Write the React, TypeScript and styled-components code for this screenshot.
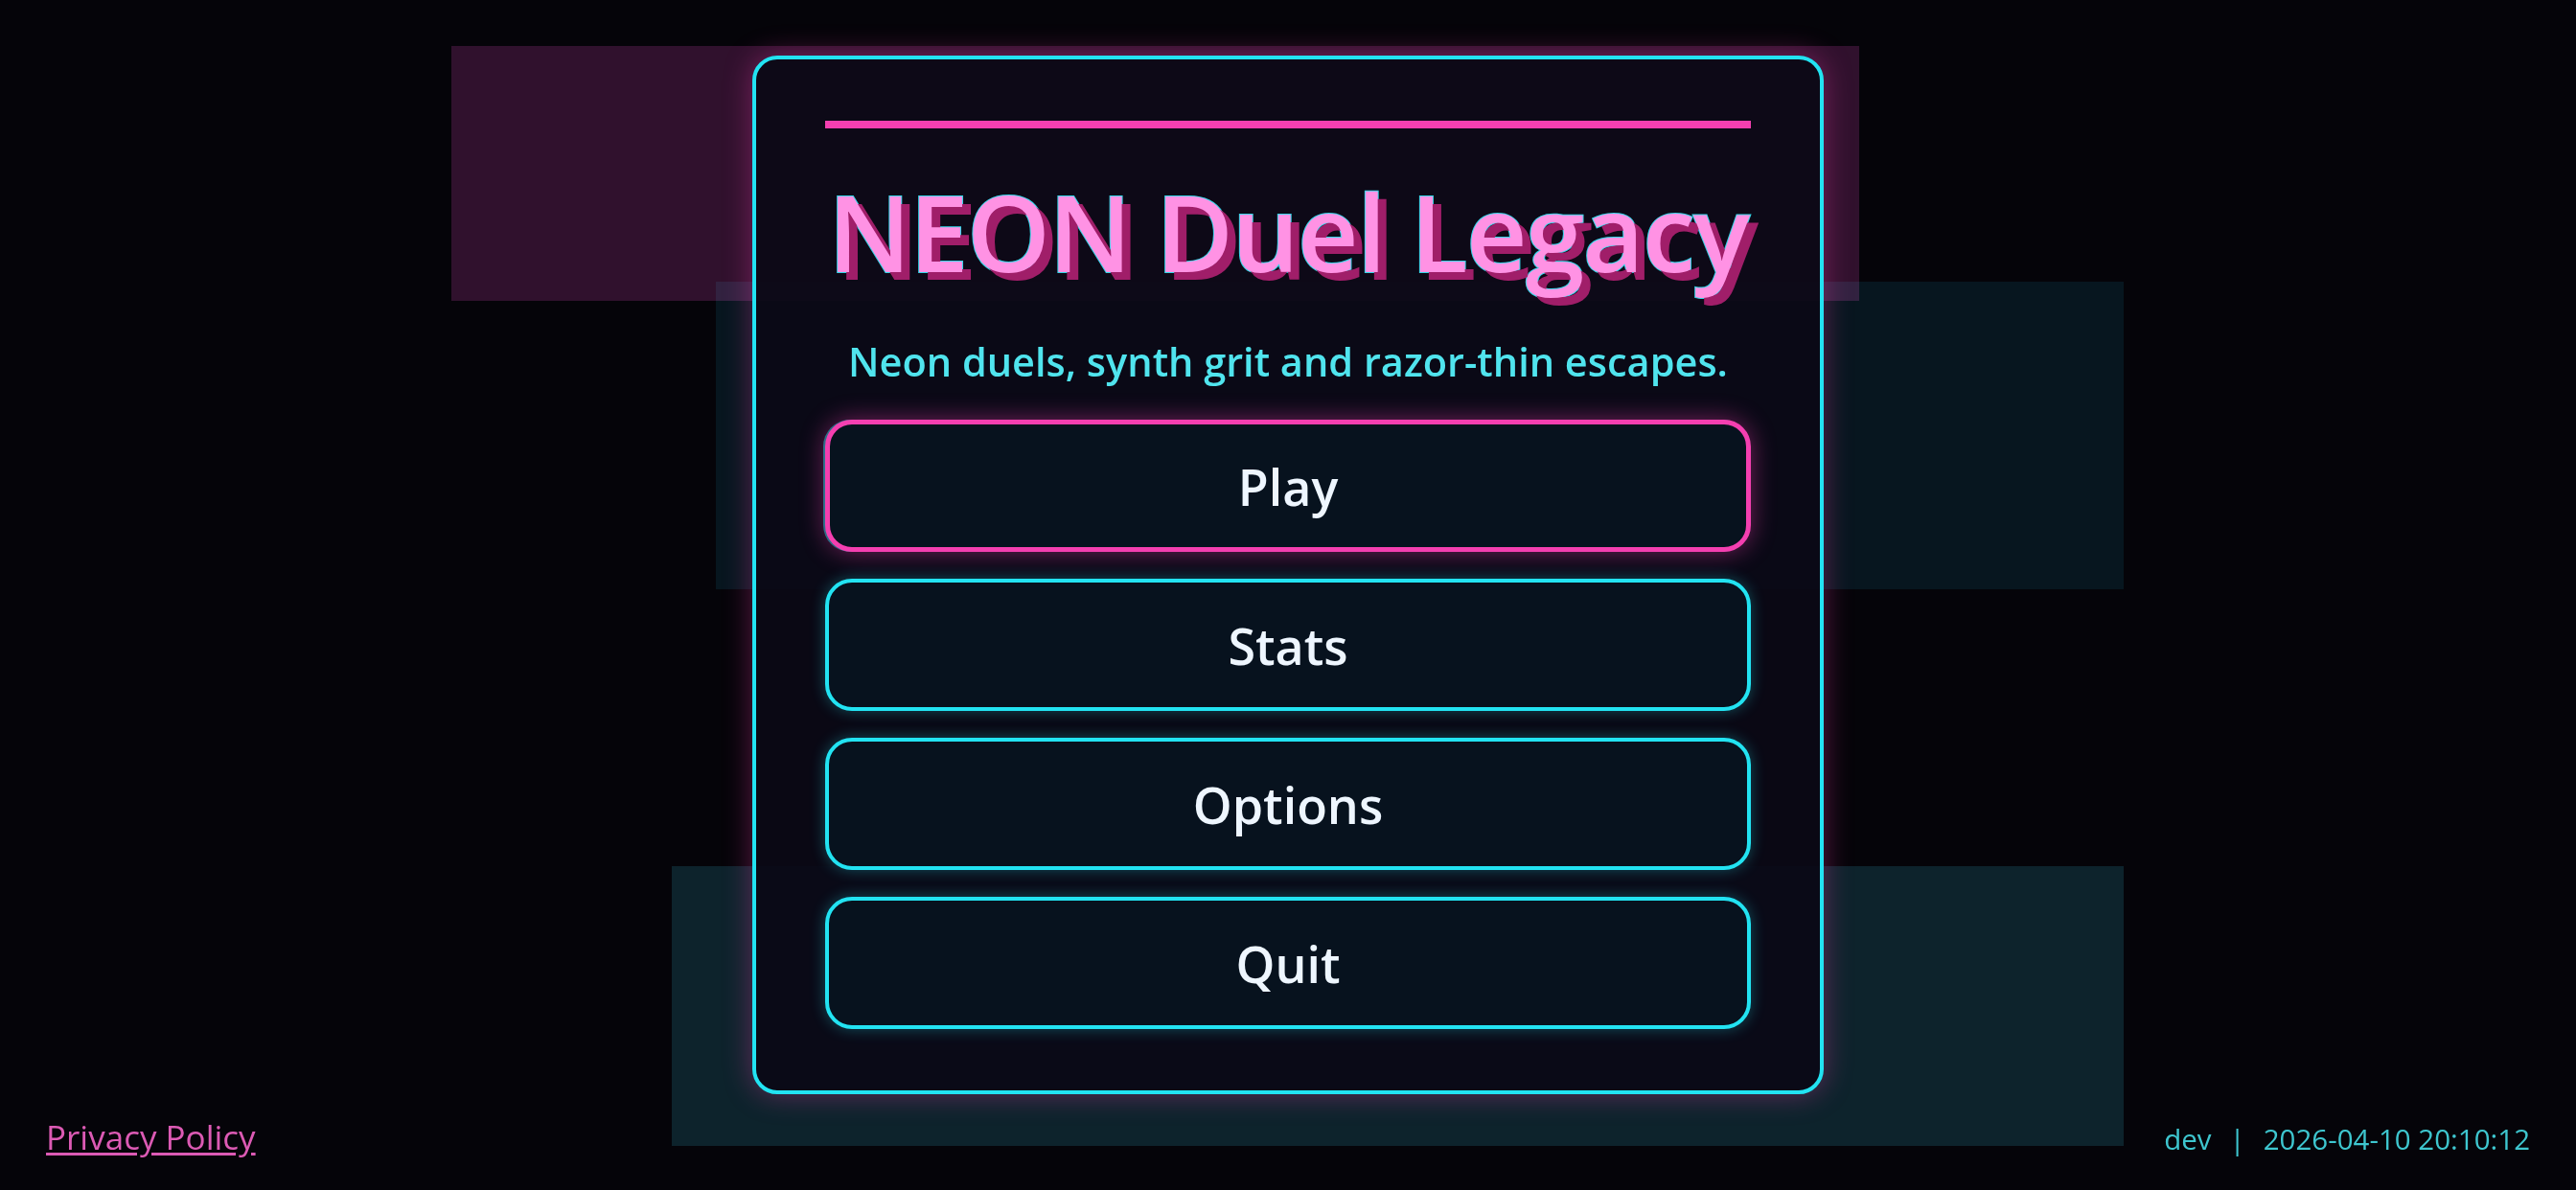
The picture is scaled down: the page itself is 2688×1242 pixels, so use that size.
import React from 'react';
import styled, { createGlobalStyle } from 'styled-components';

const GlobalStyle = createGlobalStyle`
  * { box-sizing: border-box; }
  html, body {
    margin: 0;
    padding: 0;
    background: #050409;
    font-family: "Open Sans", "Noto Sans", sans-serif;
  }
`;

// Page shell: centres the menu card above the footer strip
const Page = styled.div`
  position: relative;
  min-height: 100vh;
  display: flex;
  align-items: center;
  justify-content: center;
  padding-bottom: 42px;
  overflow: hidden;
`;

interface BlockProps {
  $left: number;
  $top: number;
  $width: number;
  $height: number;
  $color: string;
}

// Decorative backdrop slabs behind the card
const Block = styled.div<BlockProps>`
  position: absolute;
  left: ${p => p.$left}px;
  top: ${p => p.$top}px;
  width: ${p => p.$width}px;
  height: ${p => p.$height}px;
  background: ${p => p.$color};
  mix-blend-mode: screen;
  pointer-events: none;
`;

const Card = styled.section`
  position: relative;
  z-index: 1;
  width: 1118px;
  display: flex;
  flex-direction: column;
  align-items: stretch;
  padding: 64px 72px;
  border: 4px solid #22e3f2;
  border-radius: 26px;
  background: rgba(11, 9, 22, 0.93);
  box-shadow: 0 0 30px rgba(240, 60, 170, 0.38);
`;

const Accent = styled.div`
  height: 8px;
  background: #f43fb0;
`;

const Title = styled.h1`
  margin: 46px 0 0;
  font-size: 111px;
  line-height: 123px;
  font-weight: 600;
  letter-spacing: -2px;
  text-align: center;
  white-space: nowrap;
  color: #ff92e4;
  -webkit-text-stroke: 2px #34d6e8;
  paint-order: stroke fill;
  text-shadow: 9px 8px 0 #a01e69;
`;

const Tagline = styled.p`
  margin: 46px 0 0;
  font-size: 41.5px;
  line-height: 56px;
  font-weight: 600;
  text-align: center;
  color: #50e4ee;
`;

const Menu = styled.nav`
  margin-top: 33px;
  display: flex;
  flex-direction: column;
  gap: 28px;
`;

interface MenuButtonProps {
  $active?: boolean;
}

const MenuButton = styled.button<MenuButtonProps>`
  height: 138px;
  display: flex;
  align-items: center;
  justify-content: center;
  border: ${p => (p.$active ? '5px solid #f43fb0' : '4px solid #22e3f2')};
  border-radius: 28px;
  background: #07121e;
  color: #eef6ff;
  font-family: inherit;
  font-size: 52px;
  font-weight: 600;
  cursor: pointer;
  box-shadow: ${p =>
    p.$active
      ? '-2px 0 0 rgba(34, 227, 242, 0.45), 0 0 26px rgba(244, 63, 176, 0.45)'
      : '0 0 16px rgba(34, 227, 242, 0.32)'};
`;

const Footer = styled.footer`
  position: absolute;
  left: 0;
  right: 0;
  bottom: 0;
  z-index: 2;
  display: flex;
  align-items: baseline;
  justify-content: space-between;
  padding: 0 48px 32px 48px;
`;

const PolicyLink = styled.a`
  font-size: 35px;
  color: #dc5ab4;
  text-decoration: underline;
  text-underline-offset: 3px;
`;

const BuildInfo = styled.div`
  display: flex;
  align-items: baseline;
  font-size: 29.5px;
  color: #3ec6cf;
`;

const Divider = styled.span`
  margin: 0 19px;
`;

const blocks = [
  { left: 471, top: 48, width: 1469, height: 266, color: '#2c0d25' },
  { left: 747, top: 294, width: 1469, height: 321, color: '#021217' },
  { left: 701, top: 904, width: 1515, height: 292, color: '#081f24' }
];

const items = ['Play', 'Stats', 'Options', 'Quit'];

export default function App() {
  return (
    <>
      <GlobalStyle />
      <Page>
        {blocks.map((b, i) => (
          <Block
            key={i}
            $left={b.left}
            $top={b.top}
            $width={b.width}
            $height={b.height}
            $color={b.color}
          />
        ))}
        <Card>
          <Accent />
          <Title>NEON Duel Legacy</Title>
          <Tagline>Neon duels, synth grit and razor-thin escapes.</Tagline>
          <Menu>
            {items.map((label, i) => (
              <MenuButton key={label} $active={i === 0}>
                {label}
              </MenuButton>
            ))}
          </Menu>
        </Card>
        <Footer>
          <PolicyLink href="#">Privacy Policy</PolicyLink>
          <BuildInfo>
            <span>dev</span>
            <Divider>|</Divider>
            <span>2026-04-10 20:10:12</span>
          </BuildInfo>
        </Footer>
      </Page>
    </>
  );
}
